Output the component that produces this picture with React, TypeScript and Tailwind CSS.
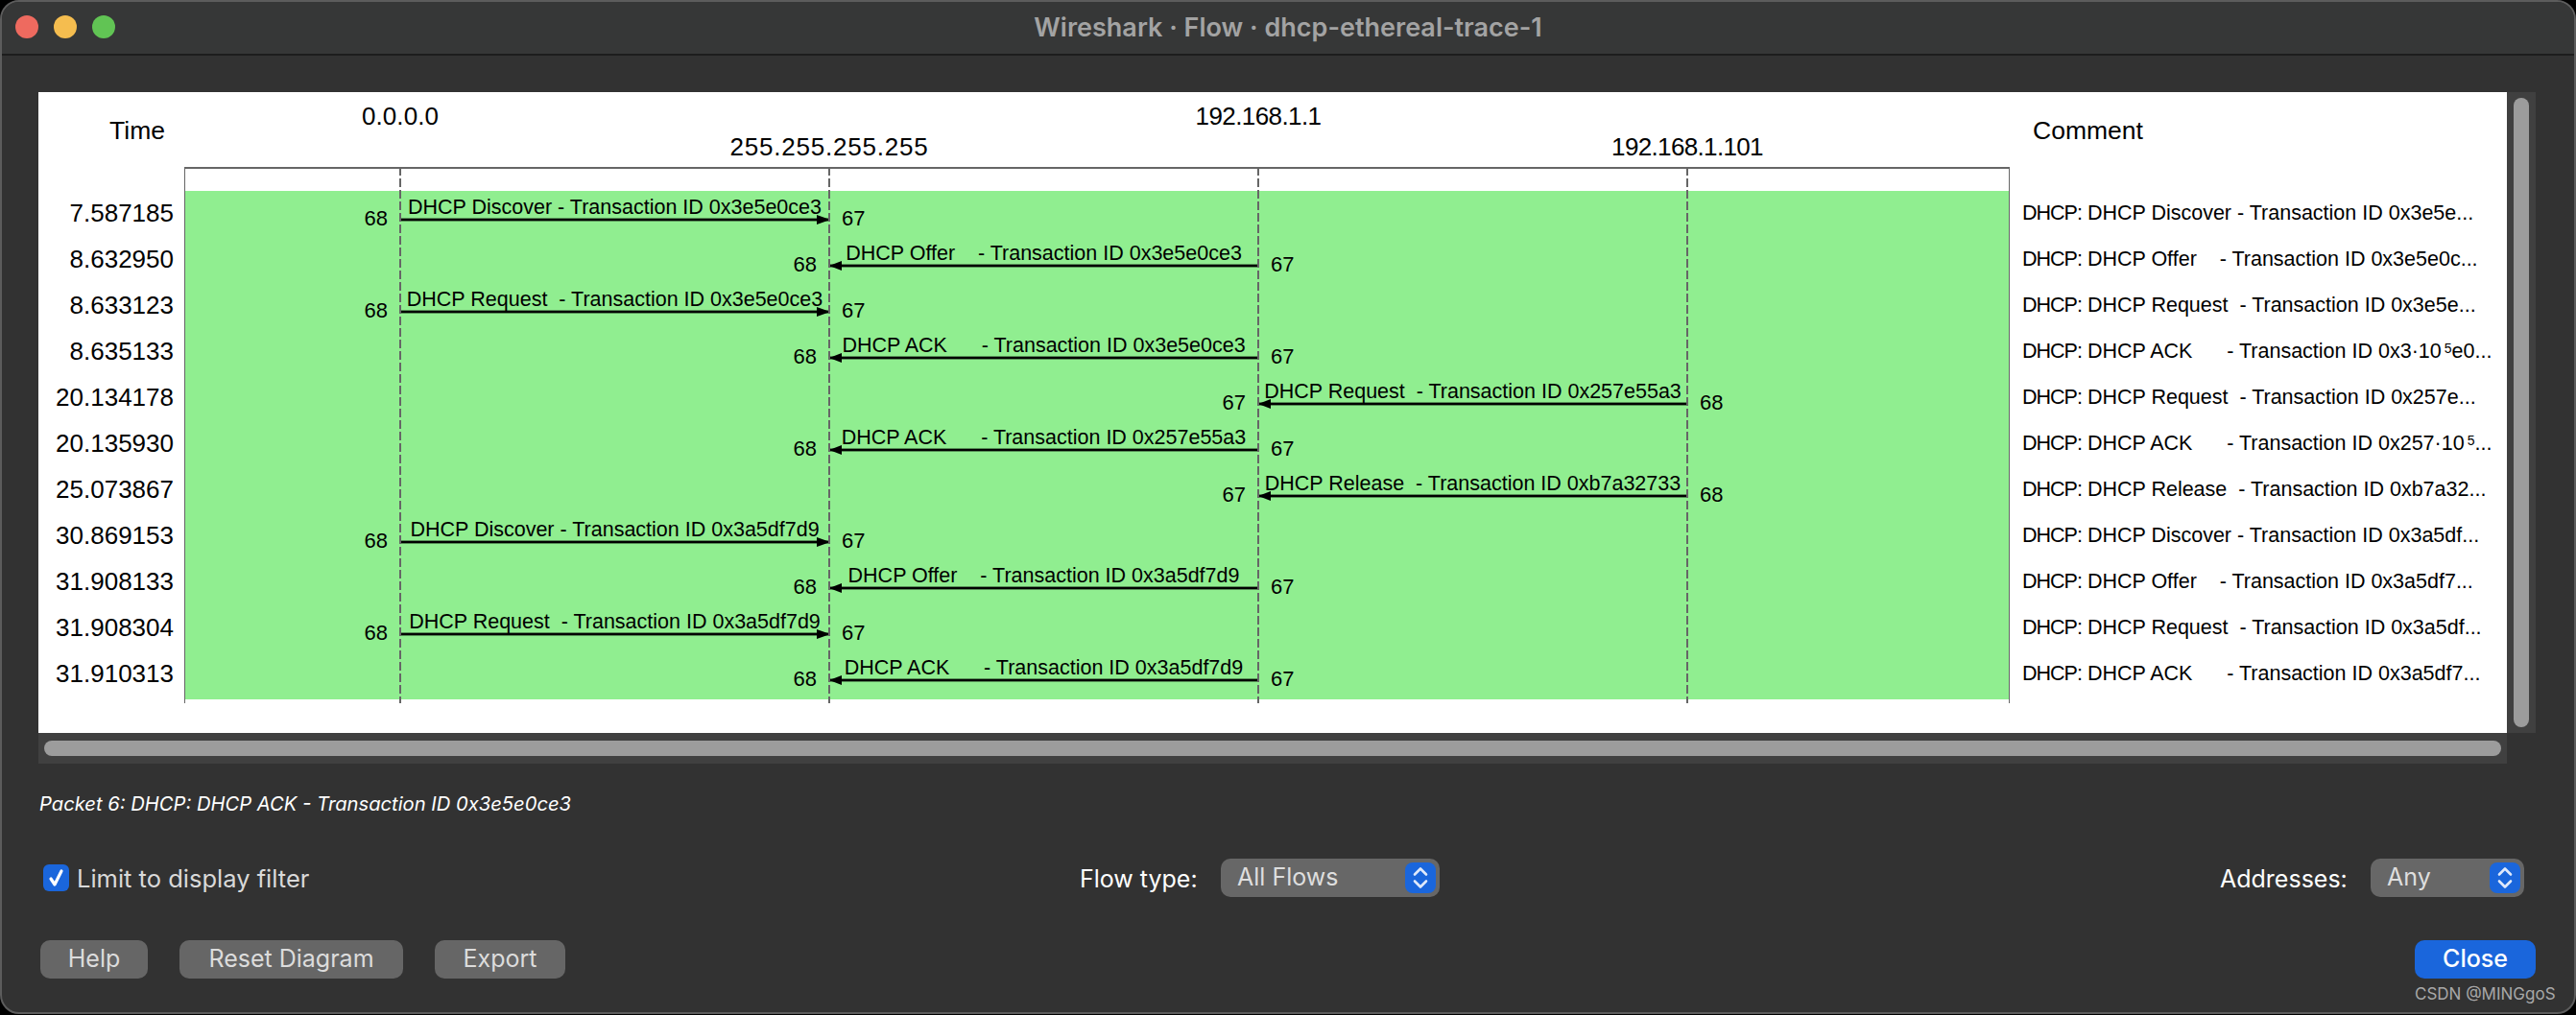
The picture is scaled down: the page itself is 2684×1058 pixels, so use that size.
const LIFELINES = [224, 671, 1118, 1565]

type Packet = {
  time: string
  from: number
  to: number
  label: string
  fromPort: string
  toPort: string
  comment: string
}

const PACKETS: Packet[] = [
  { time: '7.587185', from: 0, to: 1, label: 'DHCP Discover - Transaction ID 0x3e5e0ce3', fromPort: '68', toPort: '67', comment: 'DHCP Discover - Transaction ID 0x3e5e...' },
  { time: '8.632950', from: 2, to: 1, label: 'DHCP Offer    - Transaction ID 0x3e5e0ce3', fromPort: '67', toPort: '68', comment: 'DHCP Offer    - Transaction ID 0x3e5e0c...' },
  { time: '8.633123', from: 0, to: 1, label: 'DHCP Request  - Transaction ID 0x3e5e0ce3', fromPort: '68', toPort: '67', comment: 'DHCP Request  - Transaction ID 0x3e5e...' },
  { time: '8.635133', from: 2, to: 1, label: 'DHCP ACK      - Transaction ID 0x3e5e0ce3', fromPort: '67', toPort: '68', comment: 'DHCP ACK      - Transaction ID 0x3·10⁵e0...' },
  { time: '20.134178', from: 3, to: 2, label: 'DHCP Request  - Transaction ID 0x257e55a3', fromPort: '68', toPort: '67', comment: 'DHCP Request  - Transaction ID 0x257e...' },
  { time: '20.135930', from: 2, to: 1, label: 'DHCP ACK      - Transaction ID 0x257e55a3', fromPort: '67', toPort: '68', comment: 'DHCP ACK      - Transaction ID 0x257·10⁵...' },
  { time: '25.073867', from: 3, to: 2, label: 'DHCP Release  - Transaction ID 0xb7a32733', fromPort: '68', toPort: '67', comment: 'DHCP Release  - Transaction ID 0xb7a32...' },
  { time: '30.869153', from: 0, to: 1, label: 'DHCP Discover - Transaction ID 0x3a5df7d9', fromPort: '68', toPort: '67', comment: 'DHCP Discover - Transaction ID 0x3a5df...' },
  { time: '31.908133', from: 2, to: 1, label: 'DHCP Offer    - Transaction ID 0x3a5df7d9', fromPort: '67', toPort: '68', comment: 'DHCP Offer    - Transaction ID 0x3a5df7...' },
  { time: '31.908304', from: 0, to: 1, label: 'DHCP Request  - Transaction ID 0x3a5df7d9', fromPort: '68', toPort: '67', comment: 'DHCP Request  - Transaction ID 0x3a5df...' },
  { time: '31.910313', from: 2, to: 1, label: 'DHCP ACK      - Transaction ID 0x3a5df7d9', fromPort: '67', toPort: '68', comment: 'DHCP ACK      - Transaction ID 0x3a5df7...' },
]

const ADDRESSES = [
  { name: '0.0.0.0', line: 0, className: 'top-[10px] tracking-[0.1px]' },
  { name: '255.255.255.255', line: 1, className: 'top-[42px] tracking-[0.8px]' },
  { name: '192.168.1.1', line: 2, className: 'top-[10px] tracking-[-0.6px]' },
  { name: '192.168.1.101', line: 3, className: 'top-[42px] tracking-[-0.65px]' },
]

function Message({ packet }: { packet: Packet }) {
  const fromX = LIFELINES[packet.from]
  const toX = LIFELINES[packet.to]
  const left = Math.min(fromX, toX)
  const width = Math.abs(toX - fromX)
  const rightward = toX > fromX
  const leftPort = rightward ? packet.fromPort : packet.toPort
  const rightPort = rightward ? packet.toPort : packet.fromPort

  return (
    <div className="absolute top-0 h-[48px]" style={{ left, width }}>
      <div className="absolute inset-x-0 top-[5px] whitespace-pre text-center text-[21.5px] leading-[24px] text-black">
        {packet.label}
      </div>
      <div className="absolute right-[calc(100%+13px)] top-[17px] text-[22px] leading-[24px] text-black">{leftPort}</div>
      <div className="absolute left-[calc(100%+13px)] top-[17px] text-[22px] leading-[24px] text-black">{rightPort}</div>
      <svg className="absolute left-0 top-[23px]" width={width + 2} height="14" viewBox={`0 0 ${width + 2} 14`}>
        <rect x="0" y="5.6" width={width + 1} height="2.8" fill="#000" />
        {rightward ? (
          <polygon points={`${width - 13},2 ${width + 1},7 ${width - 13},12`} fill="#000" />
        ) : (
          <polygon points="13,2 0,7 13,12" fill="#000" />
        )}
      </svg>
    </div>
  )
}

function Comment({ text }: { text: string }) {
  const [before, after] = text.split('⁵')
  return (
    <div className="h-[48px] whitespace-pre text-[21.5px] leading-[46px]">
      <span className="tracking-[-1px]">DHCP:</span> {before}
      {after !== undefined && (
        <>
          <span className="relative -top-[5px] ml-[3px] text-[14px]">5</span>
          {after}
        </>
      )}
    </div>
  )
}

function Stepper() {
  return (
    <span className="flex h-[32px] w-[32px] items-center justify-center rounded-[8px] bg-[#1a66dc]">
      <svg width="16" height="24" viewBox="0 0 16 24" fill="none" stroke="#dfe9fb" strokeWidth="2.6" strokeLinecap="round" strokeLinejoin="round">
        <path d="M2 8.5 L8 2.5 L14 8.5" />
        <path d="M2 15.5 L8 21.5 L14 15.5" />
      </svg>
    </span>
  )
}

function SelectBox({ value, width }: { value: string; width: string }) {
  return (
    <div className={`flex h-[40px] items-center justify-between rounded-[10px] bg-[#676767] pl-[17px] pr-[4px] text-[25px] text-[#dedede] ${width}`}>
      <span>{value}</span>
      <Stepper />
    </div>
  )
}

function PushButton({ label, width }: { label: string; width: string }) {
  return (
    <button className={`flex h-[40px] items-center justify-center rounded-[10px] bg-[#666666] text-[25px] text-[#dcdcdc] ${width}`}>
      {label}
    </button>
  )
}

export default function App() {
  return (
    <div className="h-[1058px] w-[2684px] overflow-hidden bg-black font-['Inter',sans-serif]">
      <div className="flex h-[1057px] w-[2684px] flex-col overflow-hidden rounded-[20px] border-2 border-[#5c5c5c] bg-[#323232]">
        <header className="relative flex h-[56px] shrink-0 items-center justify-center border-b-2 border-[#1d1d1d] bg-[#363737]">
          <div className="absolute left-[14px] top-[14px] flex gap-[16px]">
            <span className="h-[24px] w-[24px] rounded-full bg-[#ee6a5f]" />
            <span className="h-[24px] w-[24px] rounded-full bg-[#f5bd4f]" />
            <span className="h-[24px] w-[24px] rounded-full bg-[#61c454]" />
          </div>
          <h1 className="text-[27px] font-semibold text-[#a3a3a3]">Wireshark · Flow · dhcp-ethereal-trace-1</h1>
        </header>

        <main className="flex flex-1 flex-col pl-[38px] pr-[40px] pt-[38px]">
          <div className="flex h-[668px] shrink-0">
            <div className="grid w-[2572px] grid-cols-[152px_1902px_518px] grid-rows-[78px_1fr] bg-white font-['Liberation_Sans',sans-serif] text-black">
              <div className="flex items-center justify-end pr-[20px] pt-[3px] text-[26.5px]">Time</div>
              <div className="relative">
                {ADDRESSES.map((a) => (
                  <div
                    key={a.name}
                    className={`absolute -translate-x-1/2 text-[26px] leading-[30px] ${a.className}`}
                    style={{ left: LIFELINES[a.line] + 1 }}
                  >
                    {a.name}
                  </div>
                ))}
              </div>
              <div className="flex items-center pl-[24px] pt-[3px] text-[26.5px]">Comment</div>

              <div className="pt-[25px]">
                {PACKETS.map((p) => (
                  <div key={p.time} className="flex h-[48px] items-start justify-end pr-[11px] text-[26px] leading-[46px]">
                    {p.time}
                  </div>
                ))}
              </div>

              <div className="relative h-[559px] border-x border-[#666666] before:absolute before:inset-x-[-1px] before:top-0 before:h-[2px] before:bg-[#666666]">
                <div className="mt-[25px] h-[530px] bg-[#90ee90]">
                  {PACKETS.map((p) => (
                    <div key={p.time} className="relative h-[48px]">
                      <Message packet={p} />
                    </div>
                  ))}
                </div>
                {LIFELINES.map((x) => (
                  <div
                    key={x}
                    className="absolute bottom-0 top-0 w-[2px] bg-[repeating-linear-gradient(to_bottom,#666666_0,#666666_9px,transparent_9px,transparent_12px)]"
                    style={{ left: x - 1 }}
                  />
                ))}
              </div>

              <div className="pl-[13px] pt-[25px]">
                {PACKETS.map((p) => (
                  <Comment key={p.time} text={p.comment} />
                ))}
              </div>
            </div>
            <div className="flex w-[32px] justify-center bg-[#404040] pt-[6px]">
              <div className="h-[656px] w-[16px] rounded-full bg-[#9c9c9c]" />
            </div>
          </div>

          <div className="flex h-[32px] w-[2572px] shrink-0 items-center justify-center bg-[#404040]">
            <div className="h-[16px] w-[2560px] rounded-full bg-[#9c9c9c]" />
          </div>

          <div className="mt-[29px] pl-[1px] text-[20.2px] italic leading-[26px] text-white">
            Packet 6: DHCP: DHCP ACK - Transaction ID 0x3e5e0ce3
          </div>

          <div className="mt-[44px] flex h-[40px] items-center">
            <label className="flex w-[1085px] items-center gap-[8px] pl-[5px] text-[25.5px] text-[#d9d9d9]">
              <span className="flex h-[28px] w-[27px] items-center justify-center rounded-[6px] bg-[#1a66dc]">
                <svg width="19" height="20" viewBox="0 0 19 20" fill="none" stroke="#fff" strokeWidth="3.2" strokeLinecap="round" strokeLinejoin="round">
                  <path d="M4 11 L8 17 L15 3" />
                </svg>
              </span>
              <span className="pt-[3px]">Limit to display filter</span>
            </label>
            <span className="w-[147px] pt-[3px] text-[25px] text-white">Flow type:</span>
            <SelectBox value="All Flows" width="w-[228px]" />
            <span className="ml-[813px] w-[157px] pt-[3px] text-[25px] text-white">Addresses:</span>
            <SelectBox value="Any" width="w-[160px]" />
          </div>

          <div className="relative mt-[45px] flex h-[40px] items-center">
            <div className="flex gap-[33px] pl-[2px]">
              <PushButton label="Help" width="w-[112px]" />
              <PushButton label="Reset Diagram" width="w-[233px]" />
              <PushButton label="Export" width="w-[136px]" />
            </div>
            <button className="ml-auto flex h-[40px] w-[126px] items-center justify-center rounded-[10px] bg-[#1a66dc] text-[25px] font-medium text-white">
              Close
            </button>
            <div className="absolute left-[2476px] top-[44px] whitespace-nowrap text-[17px] text-[#a8a8a8]">CSDN @MINGgoS</div>
          </div>
        </main>
      </div>
    </div>
  )
}
